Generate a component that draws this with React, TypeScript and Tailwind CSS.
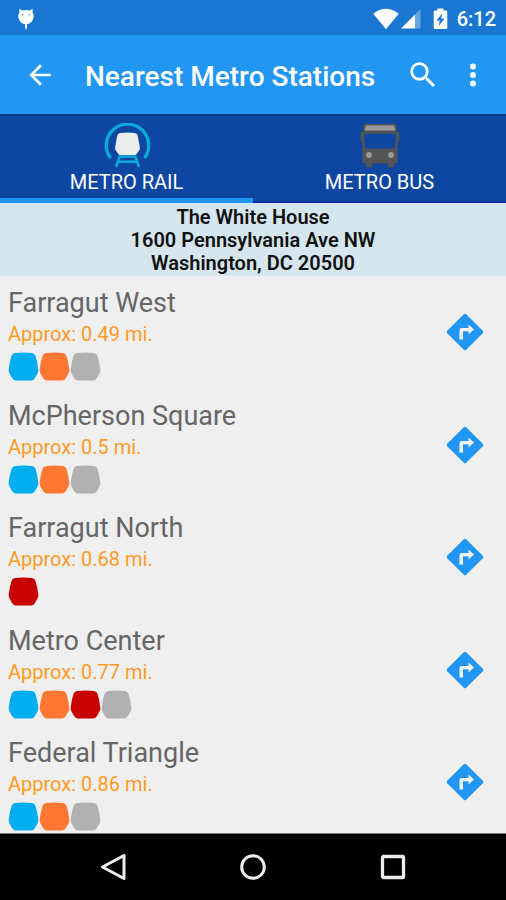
import { useState } from "react";
import clsx from "clsx";

type Line = "blue" | "orange" | "red" | "silver";

const lineColors: Record<Line, string> = {
  blue: "text-[#00adef]",
  orange: "text-[#ff7733]",
  red: "text-[#c80000]",
  silver: "text-[#b1b1b1]",
};

const stations: { name: string; distance: string; lines: Line[] }[] = [
  { name: "Farragut West", distance: "0.49", lines: ["blue", "orange", "silver"] },
  { name: "McPherson Square", distance: "0.5", lines: ["blue", "orange", "silver"] },
  { name: "Farragut North", distance: "0.68", lines: ["red"] },
  { name: "Metro Center", distance: "0.77", lines: ["blue", "orange", "red", "silver"] },
  { name: "Federal Triangle", distance: "0.86", lines: ["blue", "orange", "silver"] },
];

const StatusBar = () => (
  <div className="flex h-[35px] items-center bg-[#1976d2] pt-[2px] pr-[10px] pl-4 text-white">
    <svg width="20" height="24" viewBox="0 0 20 24" fill="currentColor">
      <path d="M3.5 1.5 6 3.6Q10 2.2 14 3.6L16.5 1.5 16.6 5.5Q18 7.5 17.6 10.5 16.5 17 10 17.2 3.5 17 2.4 10.5 2 7.5 3.4 5.5Z" />
      <path d="M9 16h2v4l-1 3-1-3Z" />
      <circle cx="6.7" cy="7.8" r="1" fill="#8db9ea" />
      <circle cx="13.3" cy="7.8" r="1" fill="#8db9ea" />
    </svg>
    <div className="ml-auto flex items-center">
      <svg width="26" height="22" viewBox="0 0 26 22" fill="currentColor">
        <path d="M0.3 5.8Q13-4.3 25.7 5.8L13 21.2Z" />
      </svg>
      <svg className="ml-[2px]" width="20" height="20" viewBox="0 0 20 20" fill="currentColor">
        <path d="M0 19.5 14 5.5v14Z" />
        <path d="M14 5.5 19.5 0v19.5H14Z" opacity="0.35" />
      </svg>
      <svg className="ml-3" width="15" height="22" viewBox="0 0 15 22" fill="currentColor">
        <path d="M4.5 0.5h6v2H13a1.3 1.3 0 0 1 1.3 1.3v16A1.3 1.3 0 0 1 13 21H2a1.3 1.3 0 0 1-1.3-1.3v-16A1.3 1.3 0 0 1 2 2.5h2.5Z" />
        <path d="M9 5.5 3.5 12.5h3.2L5.8 18l5.7-7.5H8.2Z" fill="#1976d2" />
      </svg>
      <span className="ml-[9px] text-[20px] leading-6 font-medium">6:12</span>
    </div>
  </div>
);

const AppBar = () => (
  <header className="flex h-[79px] items-center bg-[#2196f3] pr-4 pl-6 text-white">
    <button aria-label="Back">
      <svg width="32" height="32" viewBox="0 0 24 24" fill="currentColor">
        <path d="M20 11H7.83l5.59-5.59L12 4l-8 8 8 8 1.41-1.41L7.83 13H20v-2z" />
      </svg>
    </button>
    <h1 className="ml-[29px] flex-1 pt-1 text-[28px] leading-9 font-medium whitespace-nowrap">
      Nearest Metro Stations
    </h1>
    <button aria-label="Search">
      <svg width="34" height="34" viewBox="0 0 24 24" fill="currentColor">
        <path d="M15.5 14h-.79l-.28-.27A6.471 6.471 0 0 0 16 9.5 6.5 6.5 0 1 0 9.5 16c1.61 0 3.09-.59 4.23-1.57l.27.28v.79l5 4.99L20.49 19l-4.99-5zm-6 0C7.01 14 5 11.99 5 9.5S7.01 5 9.5 5 14 7.01 14 9.5 11.99 14 9.5 14z" />
      </svg>
    </button>
    <button aria-label="More options" className="ml-4">
      <svg width="34" height="34" viewBox="0 0 24 24" fill="currentColor">
        <circle cx="12" cy="6" r="2.1" />
        <circle cx="12" cy="12" r="2.1" />
        <circle cx="12" cy="18" r="2.1" />
      </svg>
    </button>
  </header>
);

const RailIcon = () => (
  <svg width="48" height="46" viewBox="0 0 48 46" fill="none">
    <path d="M7.5 35A21.2 21.2 0 1 1 41.500 35" stroke="#0aaad8" strokeWidth="3.4" />
    <path d="M16 33.500h17M15 38.800h19M17 32.500 13 44M32 32.500 36 44" stroke="#0aaad8" strokeWidth="2.6" />
    <path
      d="M17.500 10Q24.500 9 31.500 10 34.200 10.300 34.700 12.500L36.800 23.500Q37.100 25.500 36.500 27L34 30.500Q33 32 31.300 32H17.700Q16 32 15 30.500L12.500 27Q11.900 25.500 12.200 23.500L14.300 12.500Q14.800 10.300 17.500 10Z"
      fill="#ececec"
    />
  </svg>
);

const BusIcon = () => (
  <svg width="40" height="46" viewBox="0 0 40 46">
    <path
      d="M6 1h28q2.5 0 2.8 3l.3 5h1q1.2 0 1.2 1.5v8h-1.6V39q0 1.5-1.500 1.500H34v2.300q0 1.700-1.700 1.700h-2.800q-1.700 0-1.700-1.700v-2.300H12.200v2.300q0 1.700-1.700 1.700H7.700Q6 44.500 6 42.800V40.500H3.800Q2.300 40.500 2.300 39V18.500H.7v-8Q.7 9 1.900 9h1l.3-5Q3.500 1 6 1Z"
      fill="#545454"
    />
    <path d="M6 2.500h28q1.200 4 1 5H5q-.2-1 1-5Z" fill="#999" />
    <path d="M4 10.800h32L35 25.500H5Z" fill="#0d47a1" />
    <circle cx="9" cy="32" r="2.900" fill="#999" />
    <circle cx="31" cy="32" r="2.900" fill="#999" />
  </svg>
);

const tabs = [
  { id: "rail", label: "METRO RAIL", icon: RailIcon },
  { id: "bus", label: "METRO BUS", icon: BusIcon },
];

const Tabs = () => {
  const [active, setActive] = useState("rail");

  return (
    <div role="tablist" className="grid h-[89px] grid-cols-2 border-t-2 border-[#0b3d8c] bg-[#0d47a1]">
      {tabs.map(({ id, label, icon: Icon }) => (
        <button
          key={id}
          role="tab"
          aria-selected={active === id}
          onClick={() => setActive(id)}
          className={clsx(
            "flex flex-col items-center pt-[7px] text-[20px] leading-6 text-white",
            active === id ? "border-b-5 border-[#2196f3]" : "border-b-2 border-[#0a2f92]"
          )}
        >
          <Icon />
          <span className="mt-[1px]">{label}</span>
        </button>
      ))}
    </div>
  );
};

const TrainCar = ({ line }: { line: Line }) => (
  <svg className={lineColors[line]} width="31" height="29" viewBox="0 0 31 29" fill="currentColor">
    <title>{line}</title>
    <path d="M7 1Q15.500-.2 24 1 26.800 1.400 27.500 4 29.500 10 30.300 17.500 30.500 19.500 29.600 21.200L26.800 26.300Q25.600 28.400 23.600 28.400H7.400Q5.400 28.400 4.200 26.300L1.400 21.200Q.5 19.500 .7 17.500 1.500 10 3.500 4 4.200 1.400 7 1Z" />
  </svg>
);

const App = () => {
  return (
    <div className="flex min-h-screen flex-col bg-[#efefef] font-[Roboto,sans-serif]">
      <StatusBar />
      <AppBar />
      <Tabs />

      <address className="bg-[#d6e6ee] pt-[3px] pb-[1px] text-center text-[20px] leading-[23px] font-semibold text-[#111] not-italic">
        The White House
        <br />
        1600 Pennsylvania Ave NW
        <br />
        Washington, DC 20500
      </address>

      <ul className="flex flex-1 flex-col justify-between pt-[11px] pr-[22px] pb-[2px] pl-2">
        {stations.map((station) => (
          <li key={station.name} className="flex items-center justify-between">
            <div>
              <h2 className="text-[27px] leading-8 text-[#666]">{station.name}</h2>
              <p className="text-[20px] leading-[30px] text-[#ff9a1f]">Approx: {station.distance} mi.</p>
              <div className="mt-[3px] flex">
                {station.lines.map((line) => (
                  <TrainCar key={line} line={line} />
                ))}
              </div>
            </div>
            <button aria-label={`Directions to ${station.name}`} className="mb-1">
              <svg width="38" height="38" viewBox="0 0 38 38">
                <path d="M17.800 1.200Q19 .2 20.200 1.200L36.800 17.800Q37.800 19 36.800 20.200L20.200 36.800Q19 37.800 17.800 36.800L1.200 20.200Q.2 19 1.200 17.800Z" fill="#2196f3" />
                <path d="M13.500 26.500V17q0-2 2-2h7V11.500l5.500 5-5.500 5v-3.300h-5.500v8.300Z" fill="#f2f2f2" />
              </svg>
            </button>
          </li>
        ))}
      </ul>

      <nav className="flex h-[67px] items-center justify-center gap-28 border-t border-[#777] bg-black text-[#eee]">
        <button aria-label="Back">
          <svg width="28" height="28" viewBox="0 0 28 28" fill="none" stroke="currentColor" strokeWidth="3">
            <path d="M25 2.500V25.500L3.500 14Z" strokeLinejoin="round" />
          </svg>
        </button>
        <button aria-label="Home">
          <svg width="28" height="28" viewBox="0 0 28 28" fill="none" stroke="currentColor" strokeWidth="3">
            <circle cx="14" cy="14" r="11.300" />
          </svg>
        </button>
        <button aria-label="Recent apps">
          <svg width="28" height="28" viewBox="0 0 28 28" fill="none" stroke="currentColor" strokeWidth="3.300">
            <rect x="3.500" y="3.500" width="21" height="21" rx="1" />
          </svg>
        </button>
      </nav>
    </div>
  );
};

export default App;
